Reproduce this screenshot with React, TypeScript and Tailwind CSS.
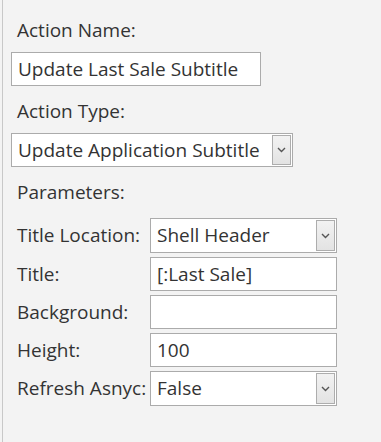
import React from "react";

const font = { fontFamily: '"Open Sans", "Noto Sans", "Liberation Sans", sans-serif' };

function Chevron() {
  return (
    <svg width="9" height="6" viewBox="0 0 9 6" fill="none">
      <path d="M1 1 L4.5 4.5 L8 1" stroke="#555" strokeWidth="1.4" />
    </svg>
  );
}

function Select({ value, className }: { value: string; className: string }) {
  return (
    <div className={`flex items-stretch border border-[#ababab] bg-white ${className}`}>
      <div className="flex-1 flex items-center pl-[6px] text-[19px] text-[#333] whitespace-nowrap overflow-hidden">{value}</div>
      <div className="w-[19px] my-[1px] mr-[1px] border border-[#adadad] bg-gradient-to-b from-[#f2f2f2] to-[#e3e3e3] flex items-center justify-center">
        <Chevron />
      </div>
    </div>
  );
}

function Input({ value, className }: { value: string; className: string }) {
  return (
    <div className={`flex items-center border border-[#ababab] bg-white pl-[6px] text-[19px] text-[#333] whitespace-nowrap ${className}`}>
      {value}
    </div>
  );
}

function ParamRow({ label, children }: { label: string; children: React.ReactNode }) {
  return (
    <div className="flex items-center">
      <div className="w-[139px] pl-[6px] text-[19px] text-[#333] whitespace-nowrap">{label}</div>
      {children}
    </div>
  );
}

export default function App() {
  return (
    <div style={font} className="w-[381px] h-[442px] bg-[#f3f3f3] overflow-hidden">
      <div className="ml-[2px] h-full border-l border-[#c8c8c8] pl-[8px] pt-[18px] flex flex-col">
        <div className="pl-[6px] text-[19px] leading-[24px] text-[#333]">Action Name:</div>
        <Input value="Update Last Sale Subtitle" className="mt-[10px] w-[250px] h-[34px]" />
        <div className="mt-[13px] pl-[6px] text-[19px] leading-[24px] text-[#333]">Action Type:</div>
        <Select value="Update Application Subtitle" className="mt-[10px] w-[282px] h-[34px]" />
        <div className="mt-[13px] pl-[6px] text-[19px] leading-[24px] text-[#333]">Parameters:</div>
        <div className="mt-[14px] flex flex-col gap-[4px]">
          <ParamRow label="Title Location:">
            <Select value="Shell Header" className="w-[187px] h-[35px]" />
          </ParamRow>
          <ParamRow label="Title:">
            <Input value="[:Last Sale]" className="w-[187px] h-[34px]" />
          </ParamRow>
          <ParamRow label="Background:">
            <Input value="" className="w-[187px] h-[34px]" />
          </ParamRow>
          <ParamRow label="Height:">
            <Input value="100" className="w-[187px] h-[34px]" />
          </ParamRow>
          <ParamRow label="Refresh Asnyc:">
            <Select value="False" className="w-[187px] h-[35px]" />
          </ParamRow>
        </div>
      </div>
    </div>
  );
}
